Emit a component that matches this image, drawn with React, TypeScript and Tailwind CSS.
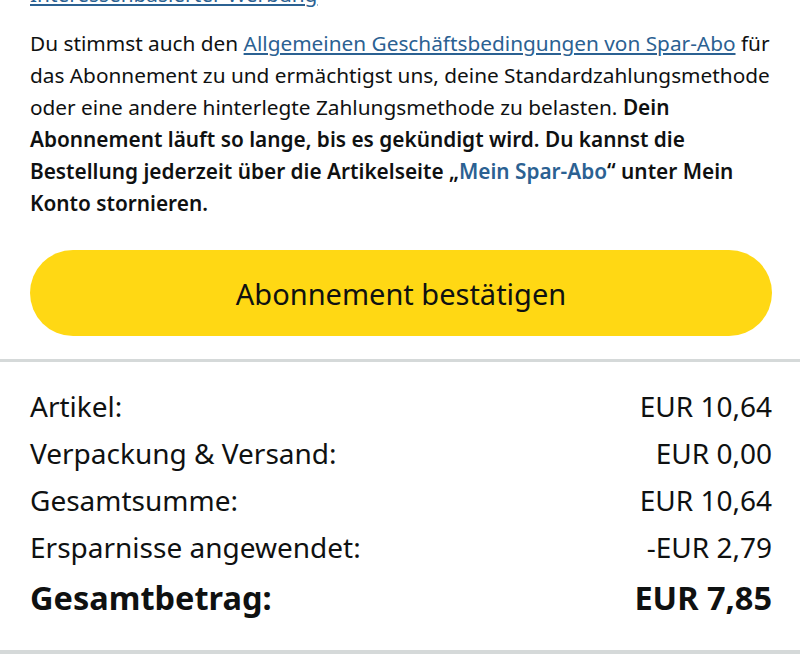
const rows = [
  { label: 'Artikel:', value: 'EUR 10,64' },
  { label: 'Verpackung & Versand:', value: 'EUR 0,00' },
  { label: 'Gesamtsumme:', value: 'EUR 10,64' },
  { label: 'Ersparnisse angewendet:', value: '-EUR 2,79' },
];

const App = () => {
  return (
    <div className="h-[660px] overflow-hidden bg-white text-[#0f1111] font-['Noto_Sans',sans-serif]">
      {/* Legal text */}
      <div className="pl-[30px] pr-[28px] mt-[-22px]">
        <p className="text-[20.8px] leading-[32px]">
          <a href="#" className="text-[#2b6192] underline underline-offset-2">Interessenbasierter Werbung</a>
        </p>
        <p className="mt-[17px] text-[20.8px] leading-[32px]">
          Du stimmst auch den{' '}
          <a href="#" className="text-[#2b6192] underline underline-offset-2">
            Allgemeinen Geschäftsbedingungen von Spar-Abo
          </a>{' '}
          für das Abonnement zu und ermächtigst uns, deine Standardzahlungsmethode oder eine andere
          hinterlegte Zahlungsmethode zu belasten.{' '}
          <span className="font-semibold">
            Dein Abonnement läuft so lange, bis es gekündigt wird. Du kannst die Bestellung jederzeit
            über die Artikelseite „<span className="text-[#2b6192]">Mein Spar-Abo</span>“ unter Mein
            Konto stornieren.
          </span>
        </p>
      </div>

      {/* Confirm button */}
      <div className="pl-[30px] pr-[28px] pt-[31px] pb-[23px]">
        <button className="w-full h-[86px] rounded-full bg-[#ffd814] text-[29px] leading-none text-[#0f1111]">
          Abonnement bestätigen
        </button>
      </div>

      <div className="h-[3px] bg-[#d5d9d9]" />

      {/* Order summary */}
      <div className="pl-[30px] pr-[28px] pt-[21px] pb-[25px]">
        {rows.map((r) => (
          <div key={r.label} className="flex justify-between text-[28px] leading-[47px]">
            <span>{r.label}</span>
            <span>{r.value}</span>
          </div>
        ))}
        <div className="flex justify-between text-[32.5px] leading-[54px] font-bold">
          <span>Gesamtbetrag:</span>
          <span>EUR 7,85</span>
        </div>
      </div>

      <div className="h-[4px] bg-[#d5d9d9]" />
    </div>
  );
};

export default App;
